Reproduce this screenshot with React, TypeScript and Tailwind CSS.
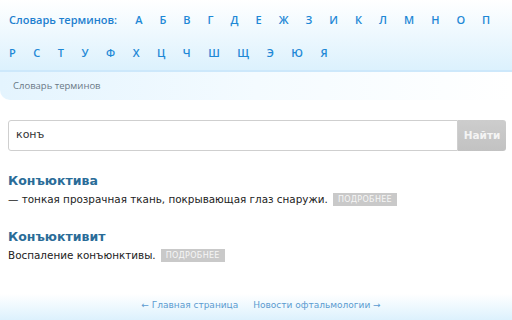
const LETTERS_1 = ["А", "Б", "В", "Г", "Д", "Е", "Ж", "З", "И", "К", "Л", "М", "Н", "О", "П"];
const LETTERS_2 = ["Р", "С", "Т", "У", "Ф", "Х", "Ц", "Ч", "Ш", "Щ", "Э", "Ю", "Я"];

const TERMS = [
  { title: "Конъюктива", text: "— тонкая прозрачная ткань, покрывающая глаз снаружи." },
  { title: "Конъюктивит", text: "Воспаление конъюнктивы." },
];

function Letter({ ch }: { ch: string }) {
  return (
    <a href="#" className="text-[#1e88d6] no-underline">
      {ch}
    </a>
  );
}

export default function App() {
  return (
    <div className="flex h-[320px] w-[512px] flex-col overflow-hidden bg-white font-['DejaVu_Sans',Verdana,sans-serif]">
      <header className="bg-gradient-to-b from-white to-[#dcf1fd] font-['Open_Sans',sans-serif] text-[11px] font-semibold">
        <nav className="flex h-[37px] items-center gap-x-[17px] pl-[9px] pt-[3px]">
          <span className="mr-[1px] text-[#1e7fcf]">Словарь терминов:</span>
          {LETTERS_1.map((l) => (
            <Letter key={l} ch={l} />
          ))}
        </nav>
        <nav className="flex h-[33px] items-center gap-x-[17.5px] pl-[9px] pb-[1px]">
          {LETTERS_2.map((l) => (
            <Letter key={l} ch={l} />
          ))}
        </nav>
      </header>
      <div className="h-[2px] bg-[#cde8fb]" />
      <div className="flex h-[28px] items-center rounded-bl-[10px] bg-gradient-to-r from-[#e4f4fe] via-[#f4fbff] to-white pl-[13px] font-['Open_Sans',sans-serif] text-[9.5px] text-[#6a7886]">
        Словарь терминов
      </div>

      <form className="mt-[20px] mr-[6px] ml-[8px] flex h-[31px]" onSubmit={(e) => e.preventDefault()}>
        <input
          defaultValue="конъ"
          className="min-w-0 flex-1 rounded-l-[3px] border border-[#cfcfcf] px-[7px] text-[11px] text-[#333] outline-none"
        />
        <button
          type="submit"
          className="w-[48px] rounded-r-[3px] bg-gradient-to-b from-[#cdcdcd] to-[#c2c2c2] text-[10.5px] font-semibold text-[#f4f4f4]"
        >
          Найти
        </button>
      </form>

      <main className="flex flex-col gap-[22px] px-[8px] pt-[21px]">
        {TERMS.map((t) => (
          <article key={t.title}>
            <h2 className="text-[12.5px] leading-[17px] font-bold text-[#2a6c98]">{t.title}</h2>
            <p className="mt-[3px] flex items-center text-[10.4px] leading-[14px] text-[#222]">
              {t.text}
              <span className="ml-[5px] bg-[#c9c9c9] px-[5px] py-[2px] text-[8px] leading-[9px] tracking-[0.3px] text-[#f6f6f6] uppercase">
                Подробнее
              </span>
            </p>
          </article>
        ))}
      </main>

      <footer className="mt-auto flex h-[26px] items-center justify-center gap-[15px] bg-gradient-to-b from-white to-[#dcf1fd] pb-[2px] pl-[10px] text-[9px] text-[#5b9bd0]">
        <a href="#">← Главная страница</a>
        <a href="#">Новости офтальмологии →</a>
      </footer>
    </div>
  );
}
